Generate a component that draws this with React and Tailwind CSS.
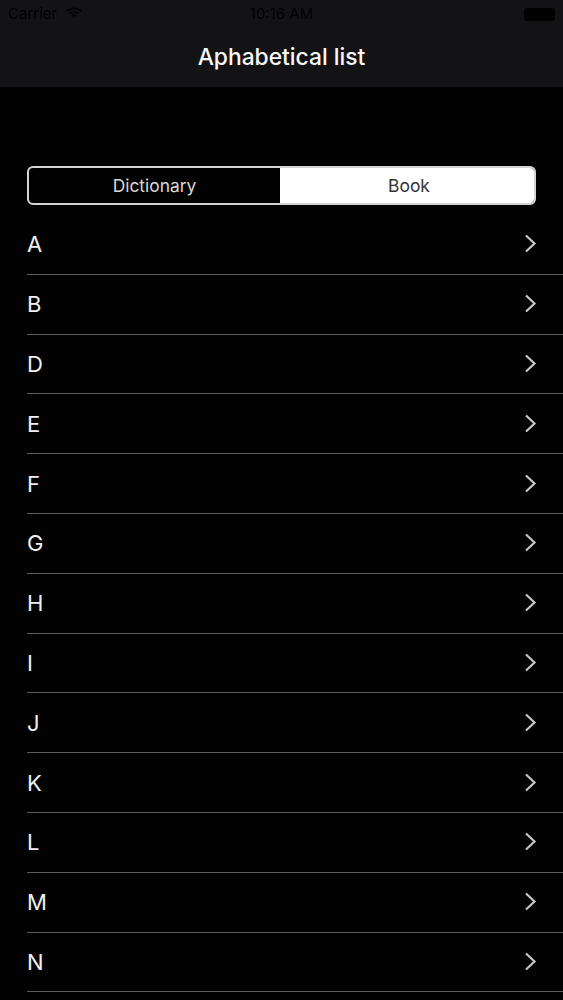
const letters = ["A","B","D","E","F","G","H","I","J","K","L","M","N"];

function Chevron() {
  return (
    <svg width="13" height="19" viewBox="0 0 13 19" fill="none" className="block -mt-[1px]">
      <path d="M2 1.5 L10.5 9.5 L2 17.5" stroke="#c8c8c8" strokeWidth="2.2" />
    </svg>
  );
}

export default function App() {
  return (
    <div className="w-[563px] h-[1000px] overflow-hidden bg-[#020203] text-white font-['Inter','Liberation_Sans',sans-serif]">
      <header className="h-[87px] bg-[#131315]">
        <div className="h-[29px] flex items-center justify-between pl-[8px] pr-[8px] text-[#020203] text-[15px] blur-[0.6px]">
          <div className="flex items-center gap-[9px] w-[120px]">
            <span>Carrier</span>
            <svg width="16" height="12" viewBox="0 0 16 12" fill="none" stroke="#020203" strokeWidth="1.8" className="-mt-[4px]">
              <path d="M1 4 C5 0.5 11 0.5 15 4" />
              <path d="M3.5 6.5 C6 4.5 10 4.5 12.5 6.5" />
              <path d="M6 9 C7 8 9 8 10 9" />
            </svg>
          </div>
          <span>10:16 AM</span>
          <div className="w-[120px] flex justify-end">
            <div className="w-[31px] h-[13px] rounded-[3px] bg-[#020203]" />
          </div>
        </div>
        <h1 className="h-[58px] -mt-[1px] flex items-center justify-center text-[22.8px] font-medium leading-none text-[#f8f8f8]">
          Aphabetical list
        </h1>
      </header>

      <main className="pl-[27px] pt-[79px]">
        <div className="w-[509px] h-[39px] flex rounded-[6px] border-2 border-[#d4d4d4] overflow-hidden text-[17.4px] leading-none">
          <div className="w-[251px] flex items-center justify-center text-[#d8d8d8]">Dictionary</div>
          <div className="flex-1 flex items-center justify-center pl-[4px] bg-white text-[#333333]">Book</div>
        </div>

        <ul className="mt-[10px]">
          {letters.map((l) => (
            <li key={l} className="h-[59.8px] flex items-center justify-between border-b border-[#5c5c5c] pr-[26px] text-[22px] text-[#f0f0f0]">
              <span className="leading-none">{l}</span>
              <Chevron />
            </li>
          ))}
        </ul>
      </main>
    </div>
  );
}
